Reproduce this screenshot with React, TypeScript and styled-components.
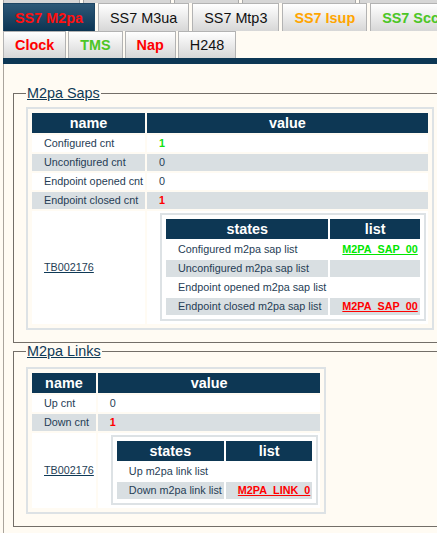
import React from "react";
import styled, { createGlobalStyle, css } from "styled-components";

const GlobalStyle = createGlobalStyle`
  html, body {
    margin: 0;
    padding: 0;
    background: #fffbf3;
    overflow: hidden;
  }
  body {
    font-family: "Liberation Sans", Arial, sans-serif;
  }
`;

const NAVY = "#0d3754";
const TEXT = "#263d55";
const GRAY_ROW = "#d9dfe2";

const Page = styled.div`
  width: 500px;
  padding-left: 3px;
`;

const StubRow = styled.div`
  display: flex;
  gap: 3px;
  height: 3px;
  overflow: hidden;
`;

const Stub = styled.div<{ $w: number }>`
  box-sizing: border-box;
  flex: 0 0 ${(p) => p.$w}px;
  height: 3px;
  background: #d6d6d6;
  border-left: 1px solid #a8a8a8;
  border-right: 1px solid #a8a8a8;
`;

const TabRow = styled.div<{ $h: number; $gap: number }>`
  display: flex;
  gap: ${(p) => p.$gap}px;
  height: ${(p) => p.$h}px;
`;

const Tab = styled.div<{ $color: string; $bold?: boolean; $active?: boolean }>`
  box-sizing: border-box;
  display: flex;
  align-items: center;
  flex: 0 0 auto;
  padding: 0 11px;
  height: 100%;
  font-size: 14.4px;
  white-space: nowrap;
  color: ${(p) => p.$color};
  font-weight: ${(p) => (p.$bold ? 700 : 400)};
  border: 1px solid #b3b3b3;
  border-bottom: none;
  background: linear-gradient(#ffffff, #d7d7d7);
  ${(p) =>
    p.$active &&
    css`
      border-color: #1d4563;
      background: linear-gradient(#2d5877, #0c3452);
    `}
`;

const Bar = styled.div`
  height: 6px;
  background: ${NAVY};
`;

const Panel = styled.div`
  border-left: 1px solid #aaa49c;
  padding-top: 21px;
  min-height: 500px;
`;

const Fieldset = styled.fieldset<{ $top: number }>`
  margin: 0 0 0 9px;
  padding: ${(p) => p.$top}px 12px 12px 12px;
  border: 1px solid #736e68;
  min-width: 0;
`;

const Legend = styled.legend`
  padding: 0 1px;
  font-size: 14.4px;
`;

const LegendLink = styled.a`
  color: #0e3956;
  text-decoration: underline;
`;

const DataTable = styled.table<{ $nested?: boolean }>`
  border: 2px solid #dde2e5;
  padding: 2px;
  border-spacing: 2px;
  ${(p) =>
    p.$nested &&
    css`
      margin: 2px 0 3px 1px;
    `}
`;

const Th = styled.th`
  background: ${NAVY};
  color: #ffffff;
  font-size: 14.4px;
  font-weight: 700;
  height: 20px;
  padding: 0 7px;
  line-height: 1;
  text-align: center;
`;

const Td = styled.td<{ $alt?: boolean }>`
  background: ${(p) => (p.$alt ? GRAY_ROW : "#ffffff")};
  color: ${TEXT};
  font-size: 10.8px;
  height: 17px;
  padding: 0 2px 0 12px;
  text-align: left;
  vertical-align: middle;
  white-space: nowrap;
  line-height: 1;
`;

const Value = styled.span<{ $tone?: "green" | "red" }>`
  color: ${(p) =>
    p.$tone === "green" ? "#11e011" : p.$tone === "red" ? "#ff0000" : TEXT};
  font-weight: ${(p) => (p.$tone ? 700 : 400)};
`;

const IdLink = styled.a`
  color: ${TEXT};
  text-decoration: underline;
  text-decoration-color: #0e3956;
`;

const ListLink = styled.a<{ $tone: "green" | "red" }>`
  color: ${(p) => (p.$tone === "green" ? "#00e600" : "#ff0000")};
  font-weight: 700;
  text-decoration: underline;
`;

type Tone = "green" | "red" | undefined;

const topTabs: { label: string; color: string; bold?: boolean; active?: boolean }[] = [
  { label: "SS7 M2pa", color: "#ff1010", bold: true, active: true },
  { label: "SS7 M3ua", color: "#111111" },
  { label: "SS7 Mtp3", color: "#111111" },
  { label: "SS7 Isup", color: "#ffa500", bold: true },
  { label: "SS7 Sccp", color: "#4cc626", bold: true },
];

const secondTabs: { label: string; color: string; bold?: boolean }[] = [
  { label: "Clock", color: "#ff0000", bold: true },
  { label: "TMS", color: "#4cc626", bold: true },
  { label: "Nap", color: "#ff0000", bold: true },
  { label: "H248", color: "#111111" },
];

const sapCounters: { name: string; value: string; tone?: Tone }[] = [
  { name: "Configured cnt", value: "1", tone: "green" },
  { name: "Unconfigured cnt", value: "0" },
  { name: "Endpoint opened cnt", value: "0" },
  { name: "Endpoint closed cnt", value: "1", tone: "red" },
];

const sapLists: { state: string; link?: string; tone?: "green" | "red" }[] = [
  { state: "Configured m2pa sap list", link: "M2PA_SAP_00", tone: "green" },
  { state: "Unconfigured m2pa sap list" },
  { state: "Endpoint opened m2pa sap list" },
  { state: "Endpoint closed m2pa sap list", link: "M2PA_SAP_00", tone: "red" },
];

const linkCounters: { name: string; value: string; tone?: Tone }[] = [
  { name: "Up cnt", value: "0" },
  { name: "Down cnt", value: "1", tone: "red" },
];

const linkLists: { state: string; link?: string; tone?: "green" | "red" }[] = [
  { state: "Up m2pa link list" },
  { state: "Down m2pa link list", link: "M2PA_LINK_0", tone: "red" },
];

function StatesTable({ rows }: { rows: typeof sapLists }) {
  return (
    <DataTable $nested>
      <thead>
        <tr>
          <Th>states</Th>
          <Th>list</Th>
        </tr>
      </thead>
      <tbody>
        {rows.map((r, i) => (
          <tr key={r.state}>
            <Td $alt={i % 2 === 1}>{r.state}</Td>
            <Td $alt={i % 2 === 1}>
              {r.link && r.tone ? <ListLink $tone={r.tone}>{r.link}</ListLink> : null}
            </Td>
          </tr>
        ))}
      </tbody>
    </DataTable>
  );
}

function Section({
  title,
  counters,
  lists,
  top,
}: {
  title: string;
  counters: typeof sapCounters;
  lists: typeof sapLists;
  top: number;
}) {
  return (
    <Fieldset $top={top}>
      <Legend>
        <LegendLink>{title}</LegendLink>
      </Legend>
      <DataTable>
        <thead>
          <tr>
            <Th>name</Th>
            <Th>value</Th>
          </tr>
        </thead>
        <tbody>
          {counters.map((c, i) => (
            <tr key={c.name}>
              <Td $alt={i % 2 === 1}>{c.name}</Td>
              <Td $alt={i % 2 === 1}>
                <Value $tone={c.tone}>{c.value}</Value>
              </Td>
            </tr>
          ))}
          <tr>
            <Td>
              <IdLink>TB002176</IdLink>
            </Td>
            <Td>
              <StatesTable rows={lists} />
            </Td>
          </tr>
        </tbody>
      </DataTable>
    </Fieldset>
  );
}

export default function App() {
  return (
    <>
      <GlobalStyle />
      <Page>
        <StubRow>
          <Stub $w={77} />
          <Stub $w={88} />
          <Stub $w={65} />
          <Stub $w={114} />
          <Stub $w={120} />
        </StubRow>
        <TabRow $h={28} $gap={3}>
          {topTabs.map((t) => (
            <Tab key={t.label} $color={t.color} $bold={t.bold} $active={t.active}>
              {t.label}
            </Tab>
          ))}
        </TabRow>
        <TabRow $h={27} $gap={2}>
          {secondTabs.map((t) => (
            <Tab key={t.label} $color={t.color} $bold={t.bold}>
              {t.label}
            </Tab>
          ))}
        </TabRow>
        <Bar />
        <Panel>
          <Section title="M2pa Saps" counters={sapCounters} lists={sapLists} top={6} />
          <Section title="M2pa Links" counters={linkCounters} lists={linkLists} top={8} />
        </Panel>
      </Page>
    </>
  );
}
